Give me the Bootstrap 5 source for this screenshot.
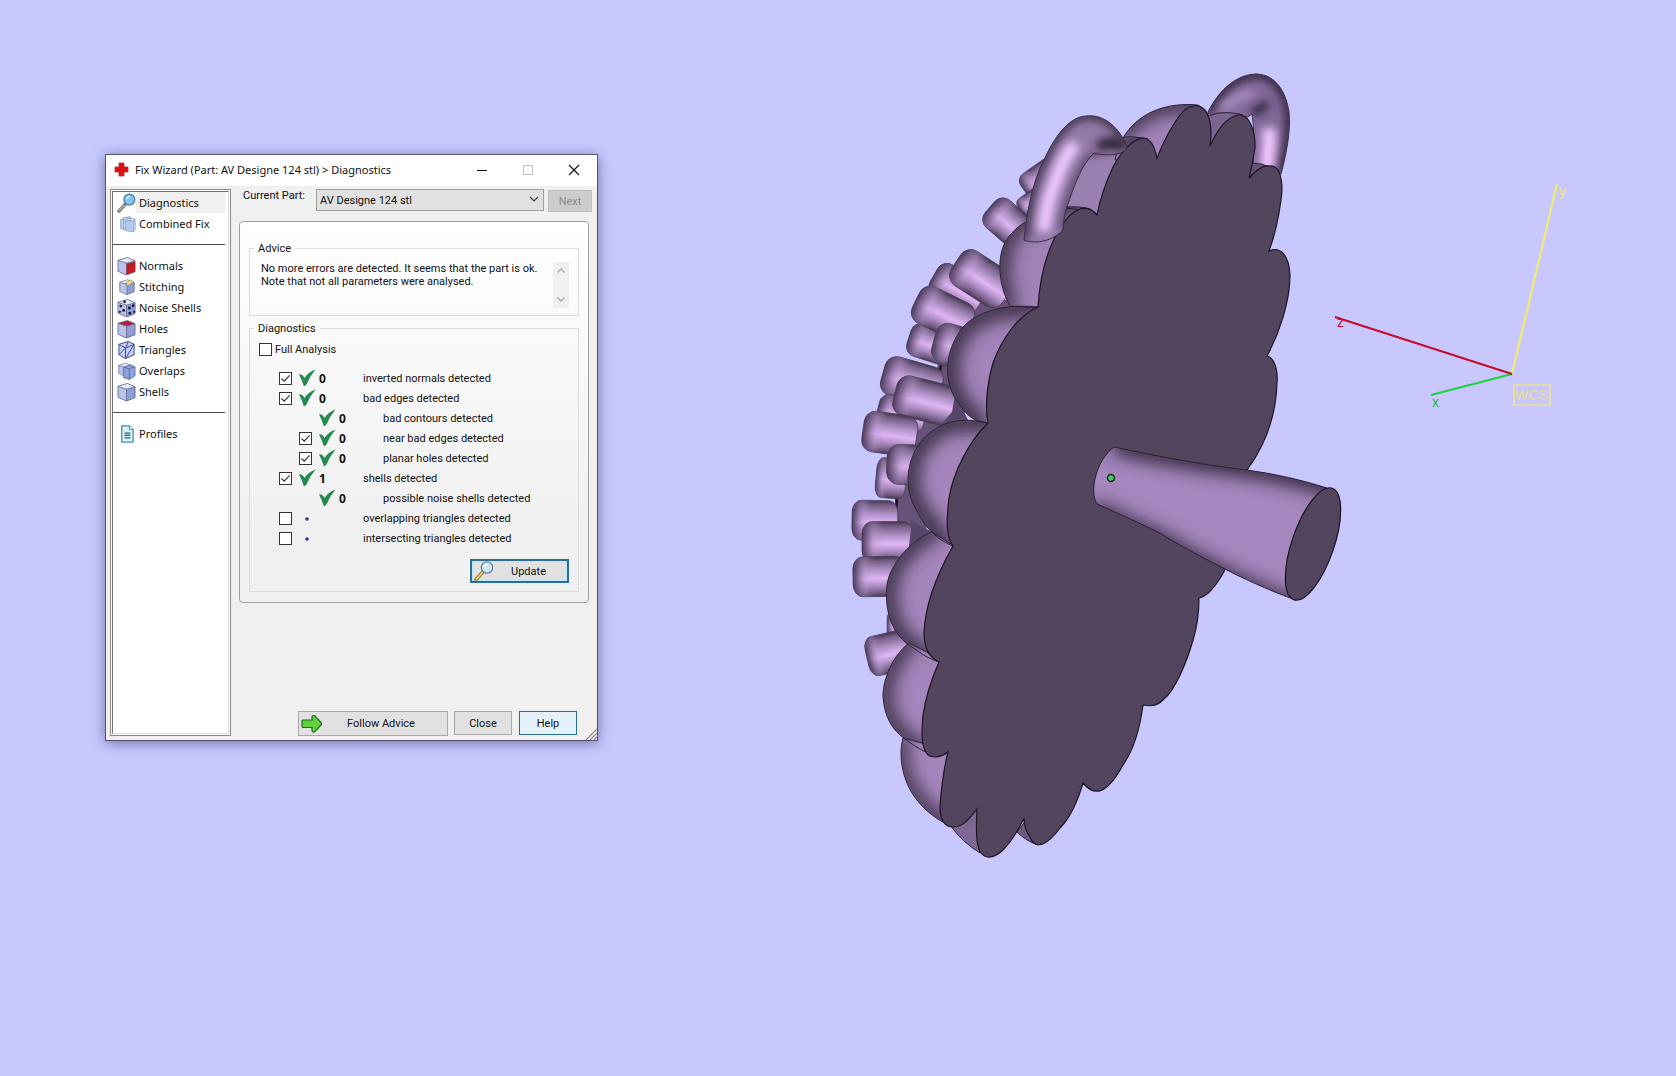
<!DOCTYPE html>
<html lang="en">
<head>
<meta charset="utf-8">
<meta name="viewport" content="width=device-width, initial-scale=1">
<title>Fix Wizard</title>
<link rel="stylesheet" href="https://cdn.jsdelivr.net/npm/bootstrap@5.3.0/dist/css/bootstrap.min.css">
<style>
  body { background: #c8c8ff; font-family: Roboto, "Liberation Sans", sans-serif; font-size: 11px; line-height: 13px; color: #111; min-height: 100vh; }
  .viewport3d { width: 100%; height: 100vh; display: block; }
  .viewport3d text { font-family: "Liberation Sans", sans-serif; font-size: 14px; }
  .ui-font { font-family: "Noto Sans", sans-serif; }

  .wizard { position: absolute; left: 105px; top: 154px; width: 493px; height: 587px; background: #f0f0f0; border: 1px solid #55536a; box-shadow: 0 2px 12px rgba(30, 30, 90, .5); }
  .titlebar { height: 31px; background: #fff; padding: 0 0 2px 8px; }
  .titlebar h1 { font-size: 11px; line-height: 16px; font-weight: 400; padding-left: 6px; }
  .win-btn { width: 46px; height: 29px; border: 0; background: none; padding: 0; display: flex; align-items: center; justify-content: center; }
  .wizard-body { padding: 3px 5px 4px 4px; gap: 8px; min-height: 0; }

  .side { width: 121px; background: #fff; border: 1px solid #8a8a8a; padding: 1px; }
  .side-inner { height: 100%; border-left: 1px solid #707070; border-top: 1px solid #707070; border-bottom: 1px solid #dcdcdc; border-right: 1px solid #dcdcdc; }
  .side a { display: flex; align-items: center; height: 21px; padding-left: 4px; color: #111; text-decoration: none; font-size: 11px; margin-right: 3px; }
  .side a span { padding: 2px 0 2px 3px; flex: 1; line-height: 17px; }
  .side a.current span { background: #f0f0f0; }
  .side svg { width: 19px; height: 20px; flex: none; }
  .side hr { margin: 10px 3px 10px 0; border-top: 1px solid #555; opacity: 1; }

  .top-row { height: 32px; padding-left: 4px; }
  .part-select { width: 228px; height: 22px; border: 1px solid #a0a0a0; border-radius: 0; background: #e1e1e1; appearance: none; padding: 0 3px; color: #111; font-size: 11px; }
  .combo svg { position: absolute; right: 5px; top: 7px; pointer-events: none; }
  .flat-btn { border: 1px solid #a8a8a8; border-radius: 0; background: #e1e1e1; color: #111; padding: 0; font-size: 11px; line-height: 13px; height: 24px; }
  .flat-btn:disabled { background: #ccc; border-color: #c0c0c0; color: #8c8c8c; }
  .next-btn { width: 44px; height: 22px; margin-top: 1px; }

  .page-panel { margin-right: 3px; border: 1px solid #a0a0a0; border-radius: 4px; background: linear-gradient(#fff, #fcfcfc 20%, #f0f0f0 80%); padding: 20px 9px 10px; height: 382px; }
  .group { border: 1px solid #dcdcdc; margin: 0; padding: 0; min-width: 0; position: relative; }
  .group legend { float: none; width: auto; font-size: 11px; line-height: 13px; margin: 0 0 0 4px; padding: 0 4px; }
  .advice { height: 74px; }
  .advice p { margin: 7px 0 0 11px; }
  .scroller { width: 16px; height: 46px; background: #f0f0f0; margin: 7px 9px 0 0; padding: 5px 0; }
  .tests { height: 270px; margin-top: 6px; }
  .box { appearance: none; width: 13px; height: 13px; margin: 0; border: 1px solid #333; background: #fff; flex: none; display: block; }
  .box:checked { background: #fff url("data:image/svg+xml,%3Csvg xmlns='http://www.w3.org/2000/svg' viewBox='0 0 11 11'%3E%3Cpath d='M1.5 5.5L4.2 8.2 9.6 2.4' fill='none' stroke='%23333' stroke-width='1.2'/%3E%3C/svg%3E"); }
  .full-row { gap: 3px; margin: 8px 0 0 9px; height: 13px; }
  .results { margin: 12px 0 0 29px; }
  .result { display: flex; align-items: center; height: 20px; }
  .result.sub { margin-left: 20px; }
  .slot { width: 13px; flex: none; }
  .result svg { width: 18px; height: 18px; margin-left: 6px; flex: none; }
  .result b { width: 47px; padding-left: 3px; font: 700 12px/13px "Noto Sans", sans-serif; }
  .update-btn { width: 99px; height: 24px; border: 2px solid #2b6e96; box-shadow: inset 0 0 0 1px #bfe8f7; margin: 11px 9px 0 auto; }
  .update-btn svg { margin-left: 2px; }
  .foot { padding-right: 15px; }
  .follow-btn { width: 150px; height: 25px; margin-right: 6px; }
  .follow-btn svg { margin-left: 2px; }
  .close-btn { width: 58px; margin-right: 7px; }
  .help-btn { width: 58px; border-color: #2b6e96; background: #e5f1fb; }
  .grip { position: absolute; right: 0; bottom: 0; }
</style>
<script src="https://cdn.jsdelivr.net/npm/bootstrap@5.3.0/dist/js/bootstrap.bundle.min.js"></script>
</head>
<body class="position-relative overflow-hidden">

<svg class="viewport3d" viewBox="0 0 1676 1076" preserveAspectRatio="xMidYMid slice" role="img" aria-label="3D part view">
  <defs>
    <filter id="soft" filterUnits="userSpaceOnUse" x="800" y="40" width="600" height="860"><feGaussianBlur stdDeviation="9"/></filter>
    <filter id="softS" filterUnits="userSpaceOnUse" x="800" y="40" width="600" height="860"><feGaussianBlur stdDeviation="4"/></filter>
    <linearGradient id="pegV" x2="0" y2="1"><stop offset="0" stop-color="#43354e"/><stop offset=".12" stop-color="#765f88"/><stop offset=".35" stop-color="#b293c8"/><stop offset=".55" stop-color="#e0b6f4"/><stop offset=".72" stop-color="#b08fc6"/><stop offset=".92" stop-color="#6d577e"/><stop offset="1" stop-color="#44364e"/></linearGradient>
    <linearGradient id="pegH"><stop offset="0" stop-color="#43354e" stop-opacity=".95"/><stop offset=".1" stop-color="#65507a" stop-opacity=".7"/><stop offset=".25" stop-color="#b898cc" stop-opacity=".35"/><stop offset=".42" stop-color="#b493c9" stop-opacity="0"/></linearGradient>
    <g id="peg"><rect y="-20" width="60" height="40" rx="12" fill="url(#pegV)" stroke="#4a3b56" stroke-width=".8"/><rect y="-20" width="60" height="40" rx="12" fill="url(#pegH)"/></g>

    <path id="d1" d="M1115 160C1122 122 1155 101 1198 105L1202 108L1157 160Z"/>
    <path id="d2" d="M1205 118C1215 112 1228 111 1243 115L1210 147Z"/>
    <path id="d3" d="M1251 163Q1262 163 1270 167L1249 179Z"/>
    <path id="d4" d="M1125 137Q1134 136 1148 139L1097 216Q1085 209 1064 208L1080 160Z"/>
    <path id="d5" d="M1064 207Q1080 206 1090 209L1060 240L1038 308L1010 306C998 285 995 252 1010 235C1024 218 1042 216 1064 207Z"/>
    <path id="d6" d="M1038 307C1000 303 975 314 963 327C943 352 943 385 960 405Q970 422 988 423L1010 340Z"/>
    <path id="d7" d="M988 423C956 415 934 425 920 443C904 464 906 493 915 507C924 528 938 540 953 546L990 450Z"/>
    <path id="d8" d="M932 532C915 538 890 562 887 585C884 612 893 636 912 647Q926 658 939 662L960 550Z"/>
    <path id="d9" d="M909 643C892 656 883 680 883 696C884 716 892 730 905 739Q922 752 938 757L950 664Z"/>
    <path id="d10" d="M903 738C898 757 903 778 912 793C922 809 936 819 950 826L955 752Z"/>
    <path id="d11" d="M950 825Q962 842 980 853L990 800Z"/>
    <path id="d12" d="M1017 832Q1026 841 1038 845L1030 815Z"/>
    <path id="loop1" d="M1024 240C1027 210 1033 180 1044 160C1057 131 1072 116 1087 116C1104 114 1120 128 1127 147C1125 154 1110 157 1094 153C1082 164 1075 184 1070 198Q1063 216 1063 230C1054 240 1037 245 1024 240Z"/>
    <path id="loop2" d="M1208 112C1220 88 1238 74 1257 74C1276 75 1286 92 1289 112C1291 132 1286 155 1281 174L1253 163Q1255 132 1252 114L1248 117L1208 114Z"/>
    <path id="cone" d="M1114 447C1160 457 1210 466 1247 470Q1290 476 1327 488L1330 520L1310 580L1296 600C1270 591 1240 577 1223 568Q1180 546 1160 533Q1120 514 1097 504C1089 492 1096 460 1114 447Z"/>
    <clipPath id="c1"><use href="#d1"/></clipPath><clipPath id="c4"><use href="#d4"/></clipPath><clipPath id="c5"><use href="#d5"/></clipPath><clipPath id="c6"><use href="#d6"/></clipPath><clipPath id="c7"><use href="#d7"/></clipPath><clipPath id="c8"><use href="#d8"/></clipPath><clipPath id="c9"><use href="#d9"/></clipPath><clipPath id="c10"><use href="#d10"/></clipPath><clipPath id="cl1"><use href="#loop1"/></clipPath><clipPath id="cl2"><use href="#loop2"/></clipPath><clipPath id="cc"><use href="#cone"/></clipPath>
  </defs>

  <!-- rear loop -->
  <g clip-path="url(#cl2)"><use href="#loop2" fill="#82699a"/>
    <path d="M1208 112C1220 88 1238 74 1257 74C1276 75 1286 92 1289 112C1291 132 1286 155 1281 174" fill="none" stroke="#382c42" stroke-width="10" filter="url(#softS)"/>
    <path d="M1222 110Q1238 94 1254 94" fill="none" stroke="#a88abd" stroke-width="9" filter="url(#softS)"/>
    <path d="M1269 128Q1270 145 1266 172" fill="none" stroke="#f0c8ff" stroke-width="14" filter="url(#softS)"/>
    <path d="M1252 114L1268 103" fill="none" stroke="#2e2338" stroke-width="8" filter="url(#softS)"/>
  </g>
  <use href="#loop2" fill="none" stroke="#3a2e44" stroke-width="1"/>

  <!-- pegs on the far rim -->
  <g>
    <path d="M972 300L1012 300L1000 360L960 420L920 470L930 560L905 660L893 620L890 570L897 520L893 480L915 420L938 365Z" fill="#67527a"/>
    <path d="M976 302L960 325M941 364L938 385M915 420L906 447M897 487L896 520M890 560L891 570M902 638L905 650" stroke="#17111c" stroke-width="2.500" fill="none"/>
    <use href="#peg" transform="translate(1024 190) rotate(-35) scale(.7)"/>
    <use href="#peg" transform="translate(1020 210) rotate(-35) scale(.5)"/>
    <use href="#peg" transform="translate(990 207) rotate(41) scale(.9)"/>
    <use href="#peg" transform="translate(934 275) rotate(30) scale(.9)"/>
    <use href="#peg" transform="translate(956 262) rotate(33) scale(1.020)"/>
    <use href="#peg" transform="translate(909 337) rotate(18) scale(.85)"/>
    <use href="#peg" transform="translate(916 300) rotate(26)"/>
    <use href="#peg" transform="translate(934 340) rotate(15)"/>
    <use href="#peg" transform="translate(883 373) rotate(16)"/>
    <use href="#peg" transform="translate(878 408) rotate(14) scale(.8)"/>
    <use href="#peg" transform="translate(895 393) rotate(14) scale(1.020)"/>
    <use href="#peg" transform="translate(863 430) rotate(8) scale(.9 1.020)"/>
    <use href="#peg" transform="translate(876 477) rotate(5) scale(.5 1)"/>
    <use href="#peg" transform="translate(887 464) rotate(2)"/>
    <use href="#peg" transform="translate(852 520) rotate(1) scale(.76 1)"/>
    <use href="#peg" transform="translate(862 542) scale(.86 1.020)"/>
    <use href="#peg" transform="translate(853 577) rotate(-1) scale(.86 1)"/>
    <use href="#peg" transform="translate(887 625) scale(.4 .7)"/>
    <use href="#peg" transform="translate(867 658) rotate(-13) scale(.7 1)"/>
    <path d="M910 520L932 532L908 553L911 530ZM955 395L968 420L938 428L952 412Z" fill="#57466a"/>
  </g>

  <!-- lobes, top to bottom -->
  <g stroke-linecap="round">
    <g clip-path="url(#c1)"><use href="#d1" fill="#a284b9"/><path d="M1122 132C1140 110 1160 101 1204 105" fill="none" stroke="#3b2f45" stroke-width="18" filter="url(#soft)"/></g>
    <use href="#d2" fill="#7c6590"/><use href="#d3" fill="#685477"/>
    <g clip-path="url(#c4)"><use href="#d4" fill="#9a7fb1"/><path d="M1090 150L1148 137" stroke="#463852" stroke-width="12" filter="url(#softS)"/></g>
    <g clip-path="url(#c5)"><use href="#d5" fill="#a082b7"/><path d="M1085 205Q1060 205 1030 215C994 235 995 275 1006 306" fill="none" stroke="#3b2f45" stroke-width="20" filter="url(#soft)"/></g>
    <g clip-path="url(#c6)"><use href="#d6" fill="#a284ba"/><path d="M1038 307C1000 303 975 314 963 327C943 352 943 385 960 405L978 426" fill="none" stroke="#3b2f45" stroke-width="22" filter="url(#soft)"/></g>
    <g clip-path="url(#c7)"><use href="#d7" fill="#a486bc"/><path d="M988 423C956 415 934 425 920 443C904 464 906 493 915 507L945 548" fill="none" stroke="#3b2f45" stroke-width="22" filter="url(#soft)"/></g>
    <g clip-path="url(#c8)"><use href="#d8" fill="#a486bc"/><path d="M932 532C915 538 890 562 887 585C884 612 893 636 912 647L933 664" fill="none" stroke="#3b2f45" stroke-width="20" filter="url(#soft)"/></g>
    <g clip-path="url(#c9)"><use href="#d9" fill="#a486bc"/><path d="M909 643C892 656 883 680 883 696C884 716 892 730 905 739L928 757" fill="none" stroke="#3b2f45" stroke-width="18" filter="url(#soft)"/></g>
    <g clip-path="url(#c10)"><use href="#d10" fill="#a486bc"/><path d="M901 740C896 757 903 778 912 793C922 809 936 819 950 826" fill="none" stroke="#3b2f45" stroke-width="16" filter="url(#soft)"/></g>
    <use href="#d11" fill="#7f6793"/><use href="#d12" fill="#6f5a80"/>
  </g>
  <g fill="none" stroke="#2e2437" stroke-width="1"><use href="#d1"/><use href="#d2"/><use href="#d3"/><use href="#d4"/><use href="#d5"/><use href="#d6"/><use href="#d7"/><use href="#d8"/><use href="#d9"/><use href="#d10"/><use href="#d11"/><use href="#d12"/></g>

  <!-- flat face -->
  <path fill="#53455d" stroke="#1d1424" stroke-width="1.200" d="M1038 307C1040 275 1046 255 1055 237C1067 213 1084 199 1097 215C1101 195 1106 182 1113 167C1121 152 1131 140 1143 138C1151 138 1155 148 1157 158C1164 140 1171 127 1180 115C1188 105 1197 103 1204 109C1211 116 1212 132 1210 146C1218 128 1228 117 1238 115C1250 114 1255 131 1255 147Q1253 163 1249 178C1258 167 1267 164 1275 167C1282 171 1283 188 1281 200Q1277 230 1269 251C1281 246 1289 256 1290 275C1290 302 1279 334 1267 356C1275 358 1278 371 1277 383C1276 418 1263 448 1247 470L1225 570C1216 586 1207 597 1199 598Q1199 621 1193 640C1186 665 1174 691 1164 699Q1156 708 1143 705C1139 735 1130 755 1123 765C1110 789 1097 800 1083 783C1077 803 1068 820 1060 828C1047 846 1035 850 1030 837Q1024 829 1024 818C1017 833 1010 843 1003 850C990 862 983 856 980 852Q975 842 977 809C967 822 962 827 953 827C945 827 940 820 940 807Q942 776 948 752C940 758 932 758 928 755C920 747 922 728 923 715Q927 689 939 662C928 657 924 645 924 633C925 605 936 576 953 546C945 535 947 515 949 498C953 473 969 441 988 423C984 402 989 376 993 363C1002 338 1018 316 1038 307Z"/>

  <!-- front loop -->
  <g clip-path="url(#cl1)"><use href="#loop1" fill="#947aaa"/>
    <path d="M1024 240C1027 210 1033 180 1044 160C1057 131 1072 116 1087 116C1104 114 1120 128 1127 147" fill="none" stroke="#3a2e45" stroke-width="8" filter="url(#softS)"/>
    <path d="M1094 153C1082 164 1075 184 1070 198Q1063 216 1063 230" fill="none" stroke="#4d3d5a" stroke-width="6" filter="url(#softS)"/>
    <path d="M1044 226Q1047 200 1055 183Q1062 160 1072 148" fill="none" stroke="#f0caff" stroke-width="13" stroke-linecap="round" filter="url(#softS)"/>
    <path d="M1098 148Q1112 138 1124 148" fill="none" stroke="#302539" stroke-width="12" filter="url(#softS)"/>
  </g>
  <use href="#loop1" fill="none" stroke="#3a2e44" stroke-width="1"/>

  <!-- cone handle -->
  <g clip-path="url(#cc)"><use href="#cone" fill="#a587bd"/>
    <path d="M1114 443C1160 453 1210 462 1247 466Q1290 472 1345 489" fill="none" stroke="#33283d" stroke-width="22" filter="url(#soft)"/>
    <path d="M1303 608C1270 597 1240 583 1223 574Q1180 552 1160 539L1092 508" fill="none" stroke="#33283d" stroke-width="16" filter="url(#soft)"/>
  </g>
  <use href="#cone" fill="none" stroke="#2c2235" stroke-width="1"/>
  <ellipse cx="1313" cy="544" rx="21" ry="59" transform="rotate(19 1313 544)" fill="#53455d" stroke="#17101d" stroke-width="1.200"/>
  <circle cx="1111" cy="478" r="3.500" fill="#4cc860" stroke="#0c2a12" stroke-width="1.500"/>

  <!-- coordinate axes -->
  <g fill="none" stroke-width="2">
    <path d="M1512 374L1557 184" stroke="#f4ee62"/>
    <path d="M1512 374L1431 395" stroke="#1fd045"/>
    <path d="M1512 374L1335 317" stroke="#c60a2c"/>
    <rect x="1514" y="385" width="36" height="20" stroke="#e9e28a" stroke-width="1.500"/>
  </g>
  <text x="1559" y="196" fill="#f0ea6a">y</text>
  <text x="1337" y="327" fill="#c60a2c">z</text>
  <text x="1432" y="407" fill="#22b84a">x</text>
  <text x="1515" y="400" fill="#e6df8c">WCS</text>
</svg>

<svg class="d-none">
  <defs>
    <symbol id="i-tick" viewBox="0 0 18 18"><path d="M1 5.500Q4 4.500 6.500 9Q10 3 17.500 .5Q12 7 8.500 15.500L6 17.500Q4 11 1 5.500Z" fill="#248a50"/></symbol>
    <symbol id="i-dot" viewBox="0 0 18 18"><circle cx="9" cy="10" r="1.800" fill="#2a2fa0"/></symbol>
    <symbol id="i-cube" viewBox="0 0 20 20"><path d="M1 4L11 1L19 4.500V16L10 19.500L1 15.500Z" fill="#b9c3e8"/><path d="M1 4L11 1L19 4.500L10 7Z" fill="#e9edfb"/><path d="M10 7L19 4.500V16L10 19.500Z" fill="#8f9fd6"/><path d="M1 4L11 1L19 4.500V16L10 19.500L1 15.500ZM1 4L10 7L19 4.500M10 7V19.500" fill="none" stroke="#57628f" stroke-width=".8"/></symbol>
    <symbol id="i-lens" viewBox="0 0 20 20"><path d="M9 11L2 18.500" stroke="#77776a" stroke-width="3.600" stroke-linecap="round"/><path d="M8 12L2 18" stroke="#b9b79c" stroke-width="1.500"/><circle cx="13" cy="6.500" r="5.700" fill="#8cc4ee" stroke="#4c83b4" stroke-width="1.500"/><path d="M10 6Q10.500 3.500 13.500 3" stroke="#e4f4ff" stroke-width="1.500" fill="none"/></symbol>
    <symbol id="i-lens2" viewBox="0 0 20 20"><path d="M9 11L2 18.500" stroke="#9a7b3a" stroke-width="3.600" stroke-linecap="round"/><path d="M9 11L2 18.500" stroke="#f0d080" stroke-width="1.800"/><circle cx="13" cy="6.500" r="5.700" fill="#cfe6f6" stroke="#6a86a4" stroke-width="1.300"/><path d="M10 6Q10.500 3.500 13.500 3" stroke="#fff" stroke-width="1.500" fill="none"/></symbol>
  </defs>
</svg>

<main class="wizard d-flex flex-column">
  <header class="titlebar d-flex align-items-center flex-shrink-0">
    <svg width="15" height="15" viewBox="0 0 15 15"><path d="M5 1H10V5H14V10H10V14H5V10H1V5H5Z" fill="#e01010" stroke="#a33" stroke-width=".8"/></svg>
    <h1 class="ui-font mb-0 flex-grow-1 text-nowrap">Fix Wizard (Part: AV Designe 124 stl) &gt; Diagnostics</h1>
    <button class="win-btn" aria-label="Minimize"><svg width="12" height="12"><path d="M1 6.500H11" stroke="#111"/></svg></button>
    <button class="win-btn" aria-label="Maximize" disabled><svg width="12" height="12"><rect x="1.500" y="1.500" width="9" height="9" fill="none" stroke="#c4c4c4"/></svg></button>
    <button class="win-btn" aria-label="Close window"><svg width="12" height="12"><path d="M1 1L11 11M11 1L1 11" stroke="#111" stroke-width="1.200"/></svg></button>
  </header>

  <div class="wizard-body d-flex flex-grow-1">
    <nav class="side ui-font flex-shrink-0">
      <div class="side-inner">
        <a href="#" class="current"><svg><use href="#i-lens"/></svg><span>Diagnostics</span></a>
        <a href="#"><svg viewBox="0 0 20 20"><path d="M4 5L10 4V14.500L4 15Z" fill="#c9daf5" stroke="#7890bd" stroke-width=".9"/><path d="M7 3.500L14 2.500V14L7 16Z" fill="#d3e2f8" stroke="#7890bd" stroke-width=".9"/><path d="M9 6L17 7V18L9 17Z" fill="#b5caee" stroke="#6d86b8" stroke-width=".9"/><path d="M9 6L11.500 4L19 5V16L17 18V7L19 5" fill="#dbe7fa" stroke="#6d86b8" stroke-width=".8"/><path d="M9 6L17 7V18L9 17Z" fill="#b5caee"/></svg><span>Combined Fix</span></a>
        <hr>
        <a href="#"><svg viewBox="0 0 20 20"><use href="#i-cube"/><path d="M10 7.500L19 5.500V16L10 19Z" fill="#c01c24"/></svg><span>Normals</span></a>
        <a href="#"><svg viewBox="0 0 20 20"><use href="#i-cube" x="2" y="1" width="17" height="18"/><path d="M8 7L14 2.500L18 4.500L11 9L10 6Z" fill="#ecd98a" stroke="#a09348" stroke-width=".7"/></svg><span>Stitching</span></a>
        <a href="#"><svg viewBox="0 0 20 20"><use href="#i-cube"/><g fill="#15182c"><circle cx="4" cy="8" r="1.500"/><circle cx="7" cy="12.500" r="1.500"/><circle cx="3" cy="14" r="1.200"/><circle cx="8" cy="3.500" r="1.400"/><circle cx="13" cy="10" r="1.500"/><circle cx="17" cy="7.500" r="1.400"/><circle cx="13.500" cy="15.500" r="1.500"/><circle cx="18" cy="14" r="1.200"/></g></svg><span>Noise Shells</span></a>
        <a href="#"><svg viewBox="0 0 20 20"><use href="#i-cube"/><path d="M1.500 4L11 1.200L18.500 4.500L10 6.800Z" fill="#b01e34"/></svg><span>Holes</span></a>
        <a href="#"><svg viewBox="0 0 20 20"><path d="M2 4L12 1L18 4V15L9 19L2 15Z" fill="#c5cff2"/><path d="M2 4L9 8L18 4M9 8V19M2 4L12 1L18 4V15L9 19L2 15ZM9 8L12 1M9 8L2 15M9 19L18 4" fill="none" stroke="#3c4795" stroke-width="1"/></svg><span>Triangles</span></a>
        <a href="#"><svg viewBox="0 0 20 20"><use href="#i-cube" x="1" y="0" width="15" height="17"/><path d="M7 6L14 3.500L19 5.500V15L13 19L7 17Z" fill="#8ea2df" stroke="#57628f" stroke-width=".8"/><path d="M7 6L13 7.500L19 5.500M13 7.500V19" fill="none" stroke="#57628f" stroke-width=".8"/></svg><span>Overlaps</span></a>
        <a href="#"><svg><use href="#i-cube"/></svg><span>Shells</span></a>
        <hr>
        <a href="#"><svg viewBox="0 0 20 20"><path d="M5 1.500H13L17 5.500V18.500H5Z" fill="#d9f2fa" stroke="#3d8ea6" stroke-width="1.300"/><path d="M13 1.500V5.500H17" fill="#fff" stroke="#3d8ea6"/><path d="M8 9H14M8 11.500H14M8 14H14" stroke="#225c74" stroke-width="1.300"/></svg><span>Profiles</span></a>
      </div>
    </nav>

    <section class="d-flex flex-column flex-grow-1">
      <div class="top-row d-flex align-items-start">
        <label for="part" class="me-auto">Current Part:</label>
        <div class="combo position-relative">
          <select id="part" class="part-select"><option>AV Designe 124 stl</option></select>
          <svg width="10" height="7"><path d="M1 1L5 5L9 1" fill="none" stroke="#444" stroke-width="1.200"/></svg>
        </div>
        <button class="flat-btn next-btn ms-1" disabled>Next</button>
      </div>

      <div class="page-panel">
        <fieldset class="group advice">
          <legend>Advice</legend>
          <div class="d-flex justify-content-between align-items-start">
            <p>No more errors are detected. It seems that the part is ok.<br>Note that not all parameters were analysed.</p>
            <div class="scroller d-flex flex-column justify-content-between align-items-center">
              <svg width="10" height="7"><path d="M1.500 5.500L5 2L8.500 5.500" fill="none" stroke="#b4b4b4" stroke-width="1.600"/></svg>
              <svg width="10" height="7"><path d="M1.500 1.500L5 5L8.500 1.500" fill="none" stroke="#b4b4b4" stroke-width="1.600"/></svg>
            </div>
          </div>
        </fieldset>

        <fieldset class="group tests">
          <legend>Diagnostics</legend>
          <div class="full-row d-flex align-items-center"><input class="box" type="checkbox" id="full"><label for="full">Full Analysis</label></div>
          <div class="results">
            <div class="result"><input class="box" type="checkbox" id="t1" checked><svg><use href="#i-tick"/></svg><b>0</b><label for="t1">inverted normals detected</label></div>
            <div class="result"><input class="box" type="checkbox" id="t2" checked><svg><use href="#i-tick"/></svg><b>0</b><label for="t2">bad edges detected</label></div>
            <div class="result sub"><span class="slot"></span><svg><use href="#i-tick"/></svg><b>0</b><span>bad contours detected</span></div>
            <div class="result sub"><input class="box" type="checkbox" id="t3" checked><svg><use href="#i-tick"/></svg><b>0</b><label for="t3">near bad edges detected</label></div>
            <div class="result sub"><input class="box" type="checkbox" id="t4" checked><svg><use href="#i-tick"/></svg><b>0</b><label for="t4">planar holes detected</label></div>
            <div class="result"><input class="box" type="checkbox" id="t5" checked><svg><use href="#i-tick"/></svg><b>1</b><label for="t5">shells detected</label></div>
            <div class="result sub"><span class="slot"></span><svg><use href="#i-tick"/></svg><b>0</b><span>possible noise shells detected</span></div>
            <div class="result"><input class="box" type="checkbox" id="t6"><svg><use href="#i-dot"/></svg><b></b><label for="t6">overlapping triangles detected</label></div>
            <div class="result"><input class="box" type="checkbox" id="t7"><svg><use href="#i-dot"/></svg><b></b><label for="t7">intersecting triangles detected</label></div>
          </div>
          <button class="flat-btn update-btn d-flex align-items-center"><svg width="20" height="20"><use href="#i-lens2"/></svg><span class="flex-grow-1 pe-2 ps-1">Update</span></button>
        </fieldset>
      </div>

      <div class="foot d-flex justify-content-end mt-auto">
        <button class="flat-btn follow-btn d-flex align-items-center"><svg width="22" height="20" viewBox="0 0 22 20"><path d="M2 6Q1 6 1 7V12Q1 13.500 2 13.500H11V17Q12 19 14 17.500L20.500 10.500V9L14 2Q12 1 11 2.500V6Z" fill="#5fd03c" stroke="#236b18" stroke-width="1.200"/></svg><span class="flex-grow-1 pe-3 ps-2">Follow Advice</span></button>
        <button class="flat-btn close-btn">Close</button>
        <button class="flat-btn help-btn">Help</button>
      </div>
    </section>
  </div>
  <svg class="grip" width="12" height="12"><path d="M1 12L12 1M5 12L12 5M9 12L12 9" stroke="#8c8c8c" stroke-width="1.200"/></svg>
</main>
</body>
</html>
